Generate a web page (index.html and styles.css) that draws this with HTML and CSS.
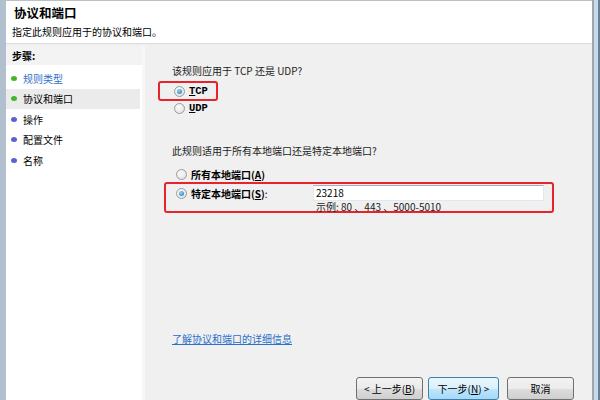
FILE: index.html
```html
<!DOCTYPE html>
<html lang="zh-CN">
<head>
    <meta charset="UTF-8">
    <title>协议和端口</title>
    <link rel="stylesheet" href="styles.css">
</head>
<body>

<div class="frame">
    <div class="window">
        <div class="header">
            <h1>协议和端口</h1>
            <p>指定此规则应用于的协议和端口。</p>
        </div>

        <div class="body">
            <div class="steps">
                <div class="steps-title">步骤:</div>
                <ul>
                    <li class="visited"><span class="dot green"></span>规则类型</li>
                    <li class="current"><span class="dot green"></span>协议和端口</li>
                    <li><span class="dot blue"></span>操作</li>
                    <li><span class="dot blue"></span>配置文件</li>
                    <li><span class="dot blue"></span>名称</li>
                </ul>
            </div>

            <div class="main">
                <p class="question q1">该规则应用于 TCP 还是 UDP?</p>
                <div class="mark tcp-box">
                    <div class="option"><span class="radio checked"></span><b class="mono"><u>T</u>CP</b></div>
                </div>
                <div class="option udp"><span class="radio"></span><b class="mono"><u>U</u>DP</b></div>

                <p class="question q2">此规则适用于所有本地端口还是特定本地端口?</p>
                <div class="option all-ports"><span class="radio"></span><b>所有本地端口(<u>A</u>)</b></div>

                <div class="mark port-box">
                    <div class="port-row">
                        <div class="option"><span class="radio checked"></span><b>特定本地端口(<u>S</u>)</b>:</div>
                        <div class="textbox">23218</div>
                    </div>
                    <div class="example">示例: 80 、443 、5000-5010</div>
                </div>

                <a class="more" href="#">了解协议和端口的详细信息</a>

                <div class="buttons">
                    <button class="btn prev">&lt; 上一步(<u>B</u>)</button>
                    <button class="btn next">下一步(<u>N</u>) &gt;</button>
                    <button class="btn cancel">取消</button>
                </div>
            </div>
        </div>
    </div>
    <div class="edge"></div>
</div>

</body>
</html>
```

FILE: styles.css
```css
body {
    margin: 0;
    font-family: "Noto Sans CJK SC", "Liberation Sans", sans-serif;
    font-size: 10px;
    color: #000;
    background: #f0f0f0;
}
.frame {
    display: flex;
    height: 400px;
    overflow: hidden;
    border-left: 6px solid #b1bfcf;
    border-right: 2px solid #6f7d8c;
}
.edge {
    width: 4px;
    background: #c2dbf3;
}
.window {
    flex: 1;
    display: flex;
    flex-direction: column;
    border-right: 2px solid #a4a4a4;
}
.header {
    height: 45px;
    background: #fff;
    border-top: 1px solid #b9c0c8;
    border-bottom: 1px solid #dcdcdc;
    box-sizing: border-box;
    padding: 4px 0 0 8px;
}
.header h1 {
    margin: 0;
    font-size: 12.5px;
    line-height: 16px;
    font-weight: bold;
}
.header p {
    margin: 4px 0 0 -2px;
    line-height: 14px;
}
.body {
    flex: 1;
    display: flex;
    padding-top: 2px;
}
.steps {
    width: 136px;
    background: #fff;
    border-right: 3px solid #f7f7f7;
}
.steps-title {
    height: 19px;
    line-height: 19px;
    padding-left: 6px;
    font-weight: bold;
    background: #f3f3f3;
}
.steps ul {
    list-style: none;
    margin: 3px 0 0;
    padding: 0;
}
.steps li {
    display: flex;
    align-items: center;
    height: 20.5px;
    margin-right: 2px;
    padding-left: 5px;
}
.steps li.visited {
    color: #2f6fc7;
}
.steps li.current {
    background: #ebebeb;
}
.dot {
    width: 6px;
    height: 5px;
    border-radius: 50%;
    margin-right: 6px;
}
.dot.green {
    background: #47b52a;
}
.dot.blue {
    background: #5a62cf;
}
.main {
    flex: 1;
    padding-left: 27px;
}
.question {
    margin: 0;
    line-height: 14px;
    color: #1c1c1c;
}
.q1 {
    margin-top: 18px;
}
.q2 {
    margin-top: 29px;
}
.mono {
    font-family: "Liberation Mono", "DejaVu Sans Mono", monospace;
    font-size: 10.5px;
}
.option {
    display: flex;
    align-items: center;
    height: 14px;
}
.radio {
    width: 11px;
    height: 11px;
    box-sizing: border-box;
    border-radius: 50%;
    border: 1px solid #9a9c9d;
    background: radial-gradient(circle at 40% 35%, #fdfdfd, #dcdcdc);
    margin-right: 4px;
    position: relative;
}
.radio.checked::after {
    content: "";
    position: absolute;
    left: 2px;
    top: 2px;
    width: 5px;
    height: 5px;
    border-radius: 50%;
    background: radial-gradient(circle at 40% 35%, #8fd3f7, #1e6fb4);
}
.mark {
    border: 2px solid #e8232b;
    border-radius: 3px;
    box-sizing: border-box;
}
.tcp-box {
    margin: 3px 0 0 -14px;
    width: 60px;
    height: 20px;
    padding: 1px 0 0 14px;
}
.udp {
    margin-left: 2px;
}
.all-ports {
    margin: 9px 0 0 4px;
}
.port-box {
    margin: 1px 0 0 -8px;
    width: 390px;
    height: 31px;
    padding: 1px 0 0 10px;
}
.port-row {
    display: flex;
    align-items: center;
    height: 16px;
}
.port-row .option {
    width: 137px;
}
.textbox {
    width: 231px;
    height: 16px;
    box-sizing: border-box;
    background: #fff;
    border: 1px solid #e2e8ef;
    border-top-color: #abadb3;
    padding-left: 2px;
    line-height: 14px;
}
.example {
    padding-left: 140px;
    line-height: 12px;
    color: #222;
}
.more {
    display: inline-block;
    margin-top: 119px;
    line-height: 14px;
    color: #2a6fc9;
}
.buttons {
    display: flex;
    justify-content: flex-end;
    margin-top: 31px;
    padding-right: 18px;
}
.btn {
    height: 23px;
    width: 67px;
    padding: 0;
    font-family: inherit;
    font-size: 10px;
    color: #000;
    border: 1px solid #707070;
    border-radius: 3px;
    background: linear-gradient(#f2f2f2 0%, #ebebeb 50%, #dddddd 51%, #cfcfcf 100%);
}
.btn.next {
    width: 71px;
    margin-left: 5px;
    border-color: #3c7fb1;
    background: linear-gradient(#eaf6fd 0%, #d9f0fc 50%, #bee6fd 51%, #a7d9f5 100%);
}
.btn.cancel {
    margin-left: 8px;
}
```
